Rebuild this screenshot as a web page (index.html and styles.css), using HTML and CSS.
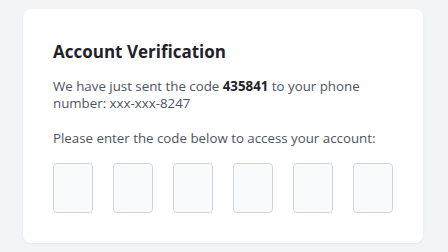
FILE: index.html
```html
<!DOCTYPE html>
<html lang="en">
<head>
<meta charset="utf-8">
<title>Account Verification</title>
<link rel="stylesheet" href="styles.css">
</head>
<body>
<main class="page">
  <section class="card">
    <h1 class="title">Account Verification</h1>
    <p class="text">We have just sent the code <strong class="code">435841</strong> to your phone number: xxx-xxx-8247</p>
    <p class="text prompt">Please enter the code below to access your account:</p>
    <div class="otp">
      <input class="digit" type="text" maxlength="1" aria-label="Digit 1">
      <input class="digit" type="text" maxlength="1" aria-label="Digit 2">
      <input class="digit" type="text" maxlength="1" aria-label="Digit 3">
      <input class="digit" type="text" maxlength="1" aria-label="Digit 4">
      <input class="digit" type="text" maxlength="1" aria-label="Digit 5">
      <input class="digit" type="text" maxlength="1" aria-label="Digit 6">
    </div>
  </section>
</main>
</body>
</html>
```
FILE: styles.css
```css
* { box-sizing: border-box; }
html, body {
  margin: 0;
  padding: 0;
  background: #f3f4f6;
  font-family: "Open Sans", "Noto Sans", sans-serif;
}
.page {
  padding: 9px 25px 9px 23px;
}
.card {
  width: 400px;
  background: #ffffff;
  border-radius: 8px;
  box-shadow: 0 1px 3px rgba(0,0,0,0.06);
  padding: 32px 30px 30px 30px;
}
.title {
  margin: 0 0 14.8px 0;
  font-size: 17px;
  line-height: 22px;
  font-weight: 700;
  color: #1f2329;
}
.text {
  margin: 0;
  font-size: 13.3px;
  line-height: 17.5px;
  color: #4b5563;
}
.code {
  font-weight: 700;
  color: #1f2329;
}
.prompt {
  margin-top: 17.3px;
}
.otp {
  display: flex;
  gap: 20px;
  margin-top: 15.4px;
}
.digit {
  width: 40px;
  height: 50px;
  margin: 0;
  padding: 0;
  border: 1px solid #d1d5db;
  border-radius: 4px;
  background: #f9fafb;
  text-align: center;
  font: inherit;
}
```
